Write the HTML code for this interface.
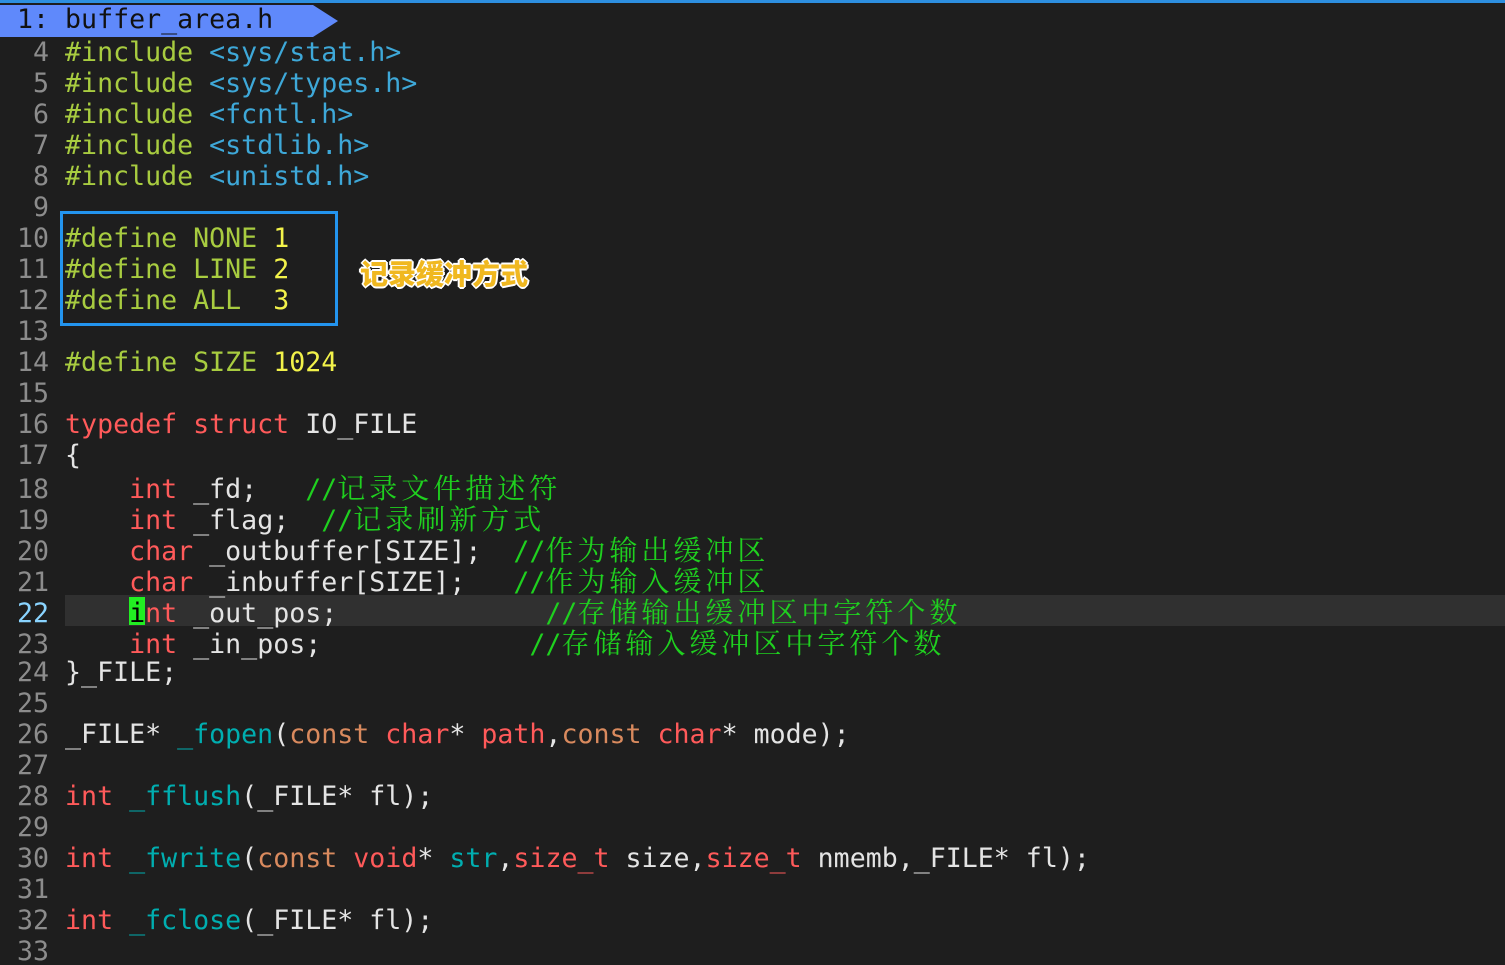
<!DOCTYPE html>
<html><head><meta charset="utf-8"><style>
html,body{margin:0;padding:0;background:#1e1e1e;width:1505px;height:965px;overflow:hidden;position:relative}
.r{position:absolute;left:1px;height:31px;line-height:32px;white-space:pre;font-family:"DejaVu Sans Mono","Liberation Mono",monospace;font-size:26.6px;color:#e4e4e4}
.n{color:#8c8c8c}
.p{color:#a8cc40}.s{color:#3ea8d8}.y{color:#f2f24a}.k{color:#ff5a5a}.o{color:#d98a5e}.f{color:#00aeb0}
.c{color:#1fd01f}
.c b{font-weight:normal;font-size:28px;letter-spacing:4px;font-family:"Noto Serif CJK SC","WenQuanYi Zen Hei",serif}
</style></head><body>
<div style="position:absolute;left:0;top:0;width:1505px;height:3px;background:#2d8fe0"></div>
<svg style="position:absolute;left:0;top:5px" width="340" height="32"><polygon points="0,0 313,0 338,16 313,32 0,32" fill="#5f89fb"/></svg>
<div class="r" style="top:4px;color:#111"> 1: buffer_area.h</div>
<div style="position:absolute;left:65px;top:595px;width:1440px;height:31px;background:#303030"></div>
<div style="position:absolute;left:129px;top:597px;width:16px;height:28px;background:#22ee22"></div>
<div class="r" style="top:37px"><span class="n">  4 </span><span class="p">#include </span><span class="s">&lt;sys/stat.h&gt;</span></div>
<div class="r" style="top:68px"><span class="n">  5 </span><span class="p">#include </span><span class="s">&lt;sys/types.h&gt;</span></div>
<div class="r" style="top:99px"><span class="n">  6 </span><span class="p">#include </span><span class="s">&lt;fcntl.h&gt;</span></div>
<div class="r" style="top:130px"><span class="n">  7 </span><span class="p">#include </span><span class="s">&lt;stdlib.h&gt;</span></div>
<div class="r" style="top:161px"><span class="n">  8 </span><span class="p">#include </span><span class="s">&lt;unistd.h&gt;</span></div>
<div class="r" style="top:192px"><span class="n">  9 </span></div>
<div class="r" style="top:223px"><span class="n"> 10 </span><span class="p">#define NONE </span><span class="y">1</span></div>
<div class="r" style="top:254px"><span class="n"> 11 </span><span class="p">#define LINE </span><span class="y">2</span></div>
<div class="r" style="top:285px"><span class="n"> 12 </span><span class="p">#define ALL  </span><span class="y">3</span></div>
<div class="r" style="top:316px"><span class="n"> 13 </span></div>
<div class="r" style="top:347px"><span class="n"> 14 </span><span class="p">#define SIZE </span><span class="y">1024</span></div>
<div class="r" style="top:378px"><span class="n"> 15 </span></div>
<div class="r" style="top:409px"><span class="n"> 16 </span><span class="k">typedef struct</span> IO_FILE</div>
<div class="r" style="top:440px"><span class="n"> 17 </span>{</div>
<div class="r" style="top:471px"><span class="n"> 18 </span>    <span class="k">int</span> _fd;   <span class="c">//<b>记录文件描述符</b></span></div>
<div class="r" style="top:502px"><span class="n"> 19 </span>    <span class="k">int</span> _flag;  <span class="c">//<b>记录刷新方式</b></span></div>
<div class="r" style="top:533px"><span class="n"> 20 </span>    <span class="k">char</span> _outbuffer[SIZE];  <span class="c">//<b>作为输出缓冲区</b></span></div>
<div class="r" style="top:564px"><span class="n"> 21 </span>    <span class="k">char</span> _inbuffer[SIZE];   <span class="c">//<b>作为输入缓冲区</b></span></div>
<div class="r" style="top:595px"><span style="color:#8ad4ff"> 22 </span>    <span style="color:#000">i</span><span class="k">nt</span> _out_pos;             <span class="c">//<b>存储输出缓冲区中字符个数</b></span></div>
<div class="r" style="top:626px"><span class="n"> 23 </span>    <span class="k">int</span> _in_pos;             <span class="c">//<b>存储输入缓冲区中字符个数</b></span></div>
<div class="r" style="top:657px"><span class="n"> 24 </span>}_FILE;</div>
<div class="r" style="top:688px"><span class="n"> 25 </span></div>
<div class="r" style="top:719px"><span class="n"> 26 </span>_FILE* <span class="f">_fopen</span>(<span class="o">const</span> <span class="k">char</span>* <span class="k">path</span>,<span class="o">const</span> <span class="k">char</span>* mode);</div>
<div class="r" style="top:750px"><span class="n"> 27 </span></div>
<div class="r" style="top:781px"><span class="n"> 28 </span><span class="k">int</span> <span class="f">_fflush</span>(_FILE* fl);</div>
<div class="r" style="top:812px"><span class="n"> 29 </span></div>
<div class="r" style="top:843px"><span class="n"> 30 </span><span class="k">int</span> <span class="f">_fwrite</span>(<span class="o">const</span> <span class="k">void</span>* <span class="f">str</span>,<span class="k">size_t</span> size,<span class="k">size_t</span> nmemb,_FILE* fl);</div>
<div class="r" style="top:874px"><span class="n"> 31 </span></div>
<div class="r" style="top:905px"><span class="n"> 32 </span><span class="k">int</span> <span class="f">_fclose</span>(_FILE* fl);</div>
<div class="r" style="top:936px"><span class="n"> 33 </span></div>
<div style="position:absolute;left:60px;top:211px;width:272px;height:109px;border:3px solid #2394ee"></div>
<div style="position:absolute;left:360px;top:255px;font-family:'Noto Sans CJK SC',sans-serif;font-weight:900;font-size:28px;line-height:36px;color:#f0b820;text-shadow:-2px 0 #fff,2px 0 #fff,0 -2px #fff,0 2px #fff,-1px -1px #fff,1px 1px #fff,-1px 1px #fff,1px -1px #fff">记录缓冲方式</div>
</body></html>
